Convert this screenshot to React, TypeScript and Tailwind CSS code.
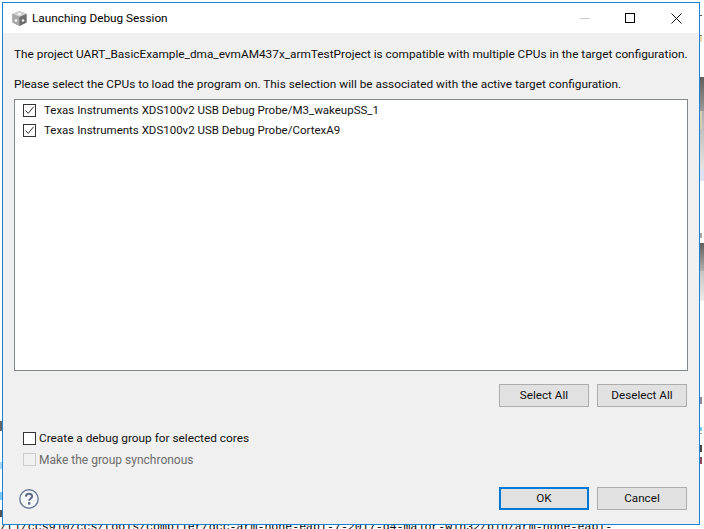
import type { ReactNode } from "react";

const font = "font-['Roboto',sans-serif]";

// slivers of the window behind the dialog, visible at the screen edges
const rightBits = [
  { top: 15, height: 1, color: "bg-[#555555]" },
  { top: 35, height: 1, color: "bg-[#777777]" },
  { top: 36, height: 6, color: "bg-[#eed6ac]" },
  { top: 111, height: 18, color: "bg-[#d8c9b0]" },
  { top: 233, height: 5, color: "bg-[#a8a8a8]" },
  { top: 397, height: 7, color: "bg-[#8a8a9a]" },
  { top: 427, height: 4, color: "bg-[#7cc6f2]" },
  { top: 433, height: 1, color: "bg-[#a8a8a8]" },
  { top: 445, height: 7, color: "bg-[#444444]" },
  { top: 457, height: 7, color: "bg-[#8a4a62]" },
];

const leftBits = [
  { top: 421, height: 10, color: "bg-[#666666]" },
  { top: 462, height: 7, color: "bg-[#a8d6f4]" },
  { top: 492, height: 8, color: "bg-[#7cc6f2]" },
  { top: 510, height: 7, color: "bg-[#555555]" },
];

function CheckBox({ checked = false, disabled = false }: { checked?: boolean; disabled?: boolean }) {
  return (
    <span
      className={`flex h-[13px] w-[13px] shrink-0 items-center justify-center border ${
        disabled ? "border-[#cccccc] bg-[#f0f0f0]" : "border-[#333333] bg-white"
      }`}
    >
      {checked ? (
        <svg width="11" height="11" viewBox="0 0 11 11" fill="none">
          <path d="M1.5 5.5 L4.2 8.4 L9.6 1.8" stroke="#333333" strokeWidth="1" />
        </svg>
      ) : null}
    </span>
  );
}

function DialogButton({ children, primary = false }: { children: ReactNode; primary?: boolean }) {
  return (
    <button
      className={`flex h-[23px] w-[90px] items-center justify-center bg-[#e1e1e1] text-[11.7px] text-[#111111] ${
        primary ? "border-2 border-[#0078d7]" : "border border-[#adadad]"
      }`}
    >
      {children}
    </button>
  );
}

function CubeIcon() {
  return (
    <svg width="17" height="17" viewBox="0 0 17 17">
      <path d="M8.5 1 L15.5 4 V12.5 L8.5 16 L1.5 12.5 V4 Z" fill="#8c8c8c" />
      <path d="M8.5 1 L15.5 4 L8.5 7 L1.5 4 Z" fill="#d2d2d2" />
      <path d="M1.5 4 L8.5 7 V16 L1.5 12.5 Z" fill="#a8a8a8" />
      <path d="M8.5 7 L15.5 4 V12.5 L8.5 16 Z" fill="#6f6f6f" />
      <circle cx="8.5" cy="4" r="1.3" fill="#ffffff" />
      <circle cx="5" cy="10.5" r="1.3" fill="#ffffff" />
      <circle cx="12" cy="10.5" r="1.3" fill="#f0f0f0" />
    </svg>
  );
}

function HelpIcon() {
  return (
    <svg width="20" height="20" viewBox="0 0 20 20" fill="none">
      <circle cx="10" cy="10" r="9.2" stroke="#6b7b96" strokeWidth="1.4" fill="#f4f5f7" />
      <path
        d="M6.9 7.6 C7 5.6 8.4 4.8 10 4.8 C11.8 4.8 13.1 5.8 13.1 7.4 C13.1 9.4 10.2 9.6 10.2 11.8"
        stroke="#5d6c87"
        strokeWidth="2"
      />
      <rect x="9" y="13.2" width="2.4" height="2.4" fill="#5d6c87" />
    </svg>
  );
}

export default function App() {
  return (
    <div className={`relative h-[529px] w-[704px] overflow-hidden bg-white ${font}`}>
      <div className="absolute left-0 top-[519px] whitespace-nowrap font-['Liberation_Mono',monospace] text-[11.6px] leading-[16px] text-black">
        /ti/ccs910/ccs/tools/compiler/gcc-arm-none-eabi-7-2017-q4-major-win32/bin/arm-none-eabi-
      </div>
      <div className="absolute left-[700px] top-[77px] h-[34px] w-[4px] bg-gradient-to-b from-[#5f5f5f] to-[#9a9a9a]" />
      <div className="absolute left-[700px] top-[111px] h-[58px] w-[4px] bg-gradient-to-b from-[#b0b0b0] to-[#e4e4e4]" />
      <div className="absolute left-[700px] top-[169px] h-[12px] w-[4px] bg-[#dfe3f0]" />
      <div className="absolute left-[700px] top-[243px] h-[28px] w-[4px] bg-gradient-to-b from-[#5f5f5f] to-[#b0b0b0]" />
      <div className="absolute left-[700px] top-[271px] h-[30px] w-[4px] bg-gradient-to-b from-[#c4c4c4] to-[#ececec]" />
      {rightBits.map((b) => (
        <div
          key={b.top}
          className={`absolute left-[700px] w-[2px] ${b.color}`}
          style={{ top: b.top, height: b.height }}
        />
      ))}
      {leftBits.map((b) => (
        <div
          key={b.top}
          className={`absolute left-0 w-[2px] ${b.color}`}
          style={{ top: b.top, height: b.height }}
        />
      ))}

      <div className="absolute left-[2px] top-[2px] flex h-[523px] w-[698px] flex-col border border-[#1883d7] bg-[#f0f0f0]">
        <div className="flex h-[30px] shrink-0 items-center bg-white pl-[8px]">
          <CubeIcon />
          <span className="ml-[4px] pt-px text-[11.8px] text-black">Launching Debug Session</span>
          <div className="ml-auto flex items-center">
            <span className="mr-[35px] h-px w-[10px] bg-[#cccccc]" />
            <span className="mr-[36px] h-[10px] w-[10px] border border-black" />
            <svg width="11" height="11" viewBox="0 0 11 11" className="mr-[17px]" fill="none">
              <path d="M0.5 0.5 L10.5 10.5 M10.5 0.5 L0.5 10.5" stroke="#111111" strokeWidth="1" />
            </svg>
          </div>
        </div>

        <div className="flex min-h-0 flex-1 flex-col px-[11px] text-[11.82px] text-[#111111]">
          <p className="mt-[12px] h-[18px] whitespace-nowrap leading-[18px]">
            The project UART_BasicExample_dma_evmAM437x_armTestProject is compatible with multiple CPUs in the target configuration.
          </p>
          <p className="mt-[12px] h-[18px] whitespace-nowrap leading-[18px]">
            Please select the CPUs to load the program on. This selection will be associated with the active target configuration.
          </p>

          <div className="mt-[6px] flex h-[272px] w-[674px] flex-col gap-[7px] border border-[#828790] bg-white pl-[8px] pt-[4px] text-[11.5px]">
            <label className="flex h-[13px] items-center gap-[8px]">
              <CheckBox checked />
              <span className="pt-px">Texas Instruments XDS100v2 USB Debug Probe/M3_wakeupSS_1</span>
            </label>
            <label className="flex h-[13px] items-center gap-[8px]">
              <CheckBox checked />
              <span className="pt-px">Texas Instruments XDS100v2 USB Debug Probe/CortexA9</span>
            </label>
          </div>

          <div className="mt-[13px] flex w-[673px] justify-end gap-[8px]">
            <DialogButton>Select All</DialogButton>
            <DialogButton>Deselect All</DialogButton>
          </div>

          <label className="ml-[9px] mt-[25px] flex h-[13px] items-center gap-[3px]">
            <CheckBox />
            <span>Create a debug group for selected cores</span>
          </label>
          <label className="ml-[9px] mt-[8px] flex h-[13px] items-center gap-[3px] text-[12px] text-[#6d6d6d]">
            <CheckBox disabled />
            <span>Make the group synchronous</span>
          </label>

          <div className="mt-[21px] flex w-[673px] items-center">
            <span className="ml-[5px]">
              <HelpIcon />
            </span>
            <div className="ml-auto flex gap-[8px]">
              <DialogButton primary>OK</DialogButton>
              <DialogButton>Cancel</DialogButton>
            </div>
          </div>
        </div>
      </div>
    </div>
  );
}
